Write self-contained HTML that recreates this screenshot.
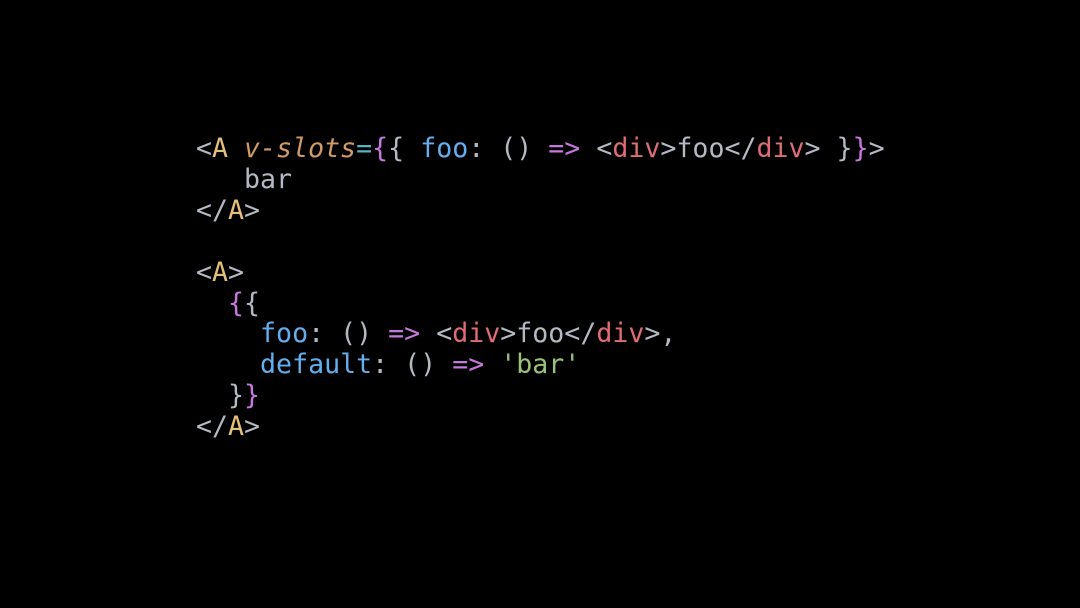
<!DOCTYPE html>
<html><head><meta charset="utf-8"><style>
html,body{margin:0;padding:0;background:#000;width:1080px;height:608px;overflow:hidden}
pre{position:absolute;left:196px;top:134px;margin:0;font-family:"DejaVu Sans Mono","Liberation Mono",monospace;font-size:26.6px;line-height:30.9px;color:#b4b9c3}
.y{color:#e5c07b}.o{color:#d19a66;font-style:italic}.c{color:#56b6c2}.p{color:#c678dd}.b{color:#61afef}.r{color:#e06c75}.g{color:#98c379}
</style></head><body>
<pre>&lt;<span class="y">A</span> <span class="o">v-slots</span><span class="c">=</span><span class="p">{</span>{ <span class="b">foo</span>: () <span class="p">=&gt;</span> &lt;<span class="r">div</span>&gt;foo&lt;/<span class="r">div</span>&gt; }<span class="p">}</span>&gt;
   bar
&lt;/<span class="y">A</span>&gt;

&lt;<span class="y">A</span>&gt;
  <span class="p">{</span>{
    <span class="b">foo</span>: () <span class="p">=&gt;</span> &lt;<span class="r">div</span>&gt;foo&lt;/<span class="r">div</span>&gt;,
    <span class="b">default</span>: () <span class="p">=&gt;</span> <span class="g">'bar'</span>
  }<span class="p">}</span>
&lt;/<span class="y">A</span>&gt;</pre>
</body></html>
